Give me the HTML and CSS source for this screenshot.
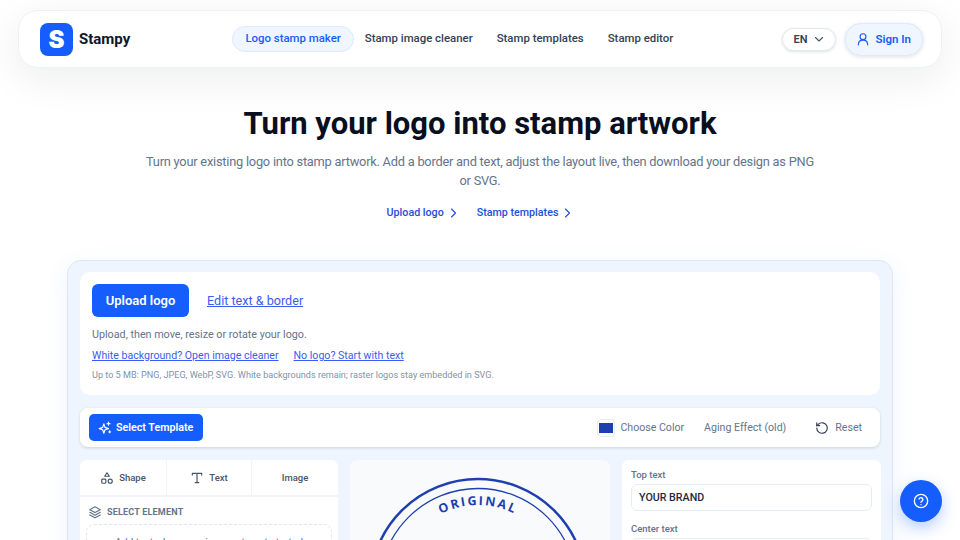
FILE: index.html
```html
<!DOCTYPE html>
<html lang="en">
<head>
  <meta charset="UTF-8" />
  <title>Stampy</title>
  <link rel="stylesheet" href="styles.css">
</head>
<body>
  <header class="navbar">
    <a class="brand">
      <span class="brand-mark">S</span>
      <span class="brand-name">Stampy</span>
    </a>
    <nav class="nav-links">
      <a class="nav-link active">Logo stamp maker</a>
      <a class="nav-link">Stamp image cleaner</a>
      <a class="nav-link">Stamp templates</a>
      <a class="nav-link">Stamp editor</a>
    </nav>
    <div class="nav-right">
      <button class="lang">EN
        <svg width="12" height="12" viewBox="0 0 24 24" fill="none" stroke="#475569" stroke-width="2.2" stroke-linecap="round" stroke-linejoin="round"><path d="M5 9l7 7 7-7"/></svg>
      </button>
      <button class="sign-in">
        <svg width="14" height="14" viewBox="0 0 24 24" fill="none" stroke="#155dfc" stroke-width="2" stroke-linecap="round" stroke-linejoin="round"><circle cx="12" cy="8" r="5"/><path d="M4 22c0-5 3.5-8 8-8s8 3 8 8"/></svg>
        Sign In
      </button>
    </div>
  </header>

  <section class="hero">
    <h1>Turn your logo into stamp artwork</h1>
    <p>Turn your existing logo into stamp artwork. Add a border and text, adjust the layout live, then download your design as PNG or SVG.</p>
    <div class="hero-links">
      <a>Upload logo
        <svg width="12" height="12" viewBox="0 0 24 24" fill="none" stroke="currentColor" stroke-width="2.2" stroke-linecap="round" stroke-linejoin="round"><path d="M9 4l8 8-8 8"/></svg>
      </a>
      <a>Stamp templates
        <svg width="12" height="12" viewBox="0 0 24 24" fill="none" stroke="currentColor" stroke-width="2.2" stroke-linecap="round" stroke-linejoin="round"><path d="M9 4l8 8-8 8"/></svg>
      </a>
    </div>
  </section>

  <section class="editor">
    <div class="upload-card">
      <div class="upload-row">
        <button class="upload-btn">Upload logo</button>
        <a class="link">Edit text &amp; border</a>
      </div>
      <p class="upload-hint">Upload, then move, resize or rotate your logo.</p>
      <div class="upload-links">
        <a class="link">White background? Open image cleaner</a>
        <a class="link">No logo? Start with text</a>
      </div>
      <p class="upload-note">Up to 5 MB: PNG, JPEG, WebP, SVG. White backgrounds remain; raster logos stay embedded in SVG.</p>
    </div>

    <div class="toolbar">
      <button class="template-btn">
        <svg width="14" height="14" viewBox="0 0 24 24" fill="none" stroke="#fff" stroke-width="2" stroke-linecap="round" stroke-linejoin="round"><path d="M10 5l2 6 6 2-6 2-2 6-2-6-6-2 6-2z"/><path d="M18 2v5M15.500 4.500h5M20 17v3M18.500 18.500h3"/></svg>
        Select Template
      </button>
      <div class="toolbar-right">
        <span class="tool"><span class="swatch"></span>Choose Color</span>
        <span class="tool">Aging Effect (old)</span>
        <span class="tool reset">
          <svg width="14" height="14" viewBox="0 0 24 24" fill="none" stroke="#334155" stroke-width="2" stroke-linecap="round" stroke-linejoin="round"><path d="M3 12a9 9 0 1 0 3-6.700L3 8"/><path d="M3 3v5h5"/></svg>
          Reset
        </span>
      </div>
    </div>

    <div class="workspace">
      <div class="panel left-panel">
        <div class="tabs">
          <span class="tab">
            <svg width="14" height="14" viewBox="0 0 24 24" fill="none" stroke="#475569" stroke-width="2" stroke-linecap="round" stroke-linejoin="round"><path d="M12 3l4 6H8z"/><rect x="3" y="14" width="7" height="7" rx="1.500"/><circle cx="17.500" cy="17.500" r="3.500"/></svg>
            Shape
          </span>
          <span class="tab">
            <svg width="14" height="14" viewBox="0 0 24 24" fill="none" stroke="#475569" stroke-width="2" stroke-linecap="round" stroke-linejoin="round"><path d="M4 7V4h16v3M12 4v16M9 20h6"/></svg>
            Text
          </span>
          <span class="tab">Image</span>
        </div>
        <div class="select-head">
          <svg width="14" height="14" viewBox="0 0 24 24" fill="none" stroke="#64748b" stroke-width="2" stroke-linecap="round" stroke-linejoin="round"><path d="M12 3l9 5-9 5-9-5z"/><path d="M3 12.500l9 5 9-5"/><path d="M3 17l9 5 9-5"/></svg>
          SELECT ELEMENT
        </div>
        <div class="drop-hint">Add text, shapes or images to get started</div>
      </div>

      <div class="panel canvas">
        <svg class="stamp" width="260" height="220" viewBox="0 0 260 220">
          <defs><path id="stamp-arc" d="M 46 127 A 82 82 0 0 1 210 127"/></defs>
          <circle cx="128" cy="127" r="108" fill="none" stroke="#1e40af" stroke-width="2.500"/>
          <circle cx="128" cy="127" r="98.500" fill="none" stroke="#1e40af" stroke-width="1.300"/>
          <text class="stamp-text"><textPath href="#stamp-arc" startOffset="50%" text-anchor="middle">ORIGINAL</textPath></text>
        </svg>
      </div>

      <div class="panel fields">
        <label class="field-label">Top text</label>
        <div class="field-input">YOUR BRAND</div>
        <label class="field-label">Center text</label>
        <div class="field-input"></div>
      </div>
    </div>
  </section>

  <button class="help-btn">
    <svg width="16" height="16" viewBox="0 0 24 24" fill="none" stroke="#fff" stroke-width="2" stroke-linecap="round" stroke-linejoin="round"><circle cx="12" cy="12" r="10"/><path d="M9.100 9a3 3 0 0 1 5.800 1c0 2-3 2.500-3 4"/><path d="M12 17.500h.01"/></svg>
  </button>
</body>
</html>
```

FILE: styles.css
```css
* {
  box-sizing: border-box;
}
html, body {
  height: 540px;
  overflow: hidden;
}
body {
  margin: 0;
  padding-top: 10px;
  font-family: "Roboto", "Liberation Sans", sans-serif;
  background: #fff;
  color: #334155;
}
button {
  font-family: inherit;
  border: none;
  cursor: pointer;
}
.navbar {
  display: flex;
  align-items: center;
  justify-content: space-between;
  width: 924px;
  height: 58px;
  margin: 0 auto;
  padding: 0 18px 0 21px;
  background: #fff;
  border: 1px solid #eef1f7;
  border-radius: 20px;
  box-shadow: 0 10px 40px rgba(15, 23, 42, 0.08);
}
.brand {
  display: flex;
  align-items: center;
  gap: 6px;
}
.brand-mark {
  display: flex;
  align-items: center;
  justify-content: center;
  width: 33px;
  height: 33px;
  border-radius: 8px;
  background: #155dfc;
  color: #fff;
  font-family: "Inter", sans-serif;
  font-size: 24px;
  font-weight: 900;
}
.brand-name {
  font-size: 15px;
  font-weight: 700;
  color: #0f172a;
}
.nav-links {
  display: flex;
  align-items: center;
  margin-left: 6px;
}
.nav-link {
  padding: 4px 11px 6px;
  font-size: 11.400px;
  font-weight: 500;
  border: 1px solid transparent;
  border-radius: 13px;
}
.nav-link.active {
  margin: 0 -1px;
  padding: 4px 12px 6px;
  color: #155dfc;
  background: #eff6ff;
  border-color: #dbeafe;
}
.nav-right {
  display: flex;
  align-items: center;
  gap: 9px;
}
.lang {
  display: flex;
  align-items: center;
  gap: 6px;
  height: 23px;
  padding: 0 10px;
  background: #fff;
  border: 1px solid #e2e8f0;
  border-radius: 12px;
  font-size: 11px;
  font-weight: 600;
  color: #334155;
  box-shadow: 0 1px 3px rgba(15, 23, 42, 0.12);
}
.sign-in {
  display: flex;
  align-items: center;
  gap: 5px;
  height: 33px;
  padding: 0 11px 0 10px;
  background: #eff6ff;
  border: 1px solid #dbeafe;
  border-radius: 16px;
  font-size: 11.500px;
  font-weight: 600;
  color: #155dfc;
  box-shadow: 0 1px 4px rgba(15, 23, 42, 0.12);
}
.hero {
  text-align: center;
  padding-top: 35px;
}
.hero h1 {
  margin: 0;
  font-size: 31px;
  line-height: 42px;
  font-weight: 700;
  color: #0a0f1f;
}
.hero p {
  width: 672px;
  margin: 7px auto 0;
  font-size: 12.800px;
  line-height: 19px;
  letter-spacing: -0.22px;
  color: #64748b;
}
.hero-links {
  display: flex;
  justify-content: center;
  gap: 18px;
  margin-top: 16px;
}
.hero-links a {
  display: flex;
  align-items: center;
  gap: 3px;
  font-size: 10.700px;
  font-weight: 500;
  color: #1d4ed8;
}
.editor {
  width: 826px;
  margin: 41px auto 0;
  padding: 11px 12px;
  background: #eff5fe;
  border: 1px solid #dbe6f8;
  border-radius: 14px;
  box-shadow: 0 6px 24px rgba(37, 99, 235, 0.08);
}
.upload-card {
  height: 123px;
  padding: 12px;
  background: #fff;
  border-radius: 10px;
}
.upload-row {
  display: flex;
  align-items: center;
  gap: 18px;
}
.upload-btn {
  width: 97px;
  height: 33px;
  background: #155dfc;
  color: #fff;
  border-radius: 6px;
  font-size: 13px;
  font-weight: 600;
}
.link {
  color: #3b5bf0;
  text-decoration: underline;
}
.upload-row .link {
  font-size: 12.600px;
}
.upload-hint {
  margin: 11px 0 0;
  font-size: 10.750px;
  color: #64748b;
}
.upload-links {
  display: flex;
  gap: 15px;
  margin-top: 8px;
  font-size: 10.600px;
}
.upload-note {
  margin: 8px 0 0;
  font-size: 9.100px;
  color: #8492a6;
}
.toolbar {
  display: flex;
  align-items: center;
  justify-content: space-between;
  height: 39px;
  margin-top: 13px;
  padding: 0 18px 0 9px;
  background: #fff;
  border-radius: 8px;
  box-shadow: 0 1px 3px rgba(15, 23, 42, 0.16);
}
.template-btn {
  display: flex;
  align-items: center;
  gap: 4px;
  height: 27px;
  padding: 0 10px 0 9px;
  background: #155dfc;
  color: #fff;
  border-radius: 5px;
  font-size: 10.700px;
  font-weight: 600;
}
.toolbar-right {
  display: flex;
  align-items: center;
  gap: 20px;
}
.tool {
  display: flex;
  align-items: center;
  gap: 5px;
  font-size: 10.600px;
  color: #64748b;
}
.tool.reset {
  margin-left: 9px;
  gap: 6px;
}
.swatch {
  width: 18px;
  height: 18px;
  padding: 3px 1px;
  background: #1e40af content-box;
  border: 1px solid #e8eef8;
  border-radius: 3px;
}
.workspace {
  display: grid;
  grid-template-columns: 258px 260px 259px;
  gap: 12px;
  margin-top: 13px;
}
.panel {
  height: 200px;
  background: #fff;
  border-radius: 7px;
  overflow: hidden;
}
.tabs {
  display: grid;
  grid-template-columns: 86px 85px 87px;
  height: 37px;
  border-bottom: 2px solid #f1f5f9;
}
.tab {
  display: flex;
  align-items: center;
  justify-content: center;
  gap: 5px;
  font-size: 9.500px;
  font-weight: 500;
  color: #475569;
  border-left: 1px solid #f1f5f9;
}
.tab:first-child {
  border-left: none;
}
.select-head {
  display: flex;
  align-items: center;
  gap: 5px;
  padding: 8px 8px 0;
  font-size: 9px;
  font-weight: 700;
  letter-spacing: 0.2px;
  color: #64748b;
}
.drop-hint {
  margin: 5px 6px 0;
  padding: 11px 0 8px;
  border: 1px dashed #e2e8f0;
  border-radius: 8px;
  text-align: center;
  font-size: 10.300px;
  color: #64748b;
}
.canvas {
  background: #f8fafc;
}
.stamp {
  display: block;
}
.stamp-text {
  font-family: "Open Sans", sans-serif;
  font-size: 12.500px;
  font-weight: 700;
  letter-spacing: 2px;
  fill: #1e40af;
}
.fields {
  padding: 9px;
}
.field-label {
  display: block;
  font-size: 9.500px;
  font-weight: 500;
  color: #64748b;
}
.field-input {
  height: 27px;
  margin: 4px 0 12px;
  padding: 0 7px;
  border: 1px solid #e8edf5;
  border-radius: 6px;
  font-size: 10.700px;
  font-weight: 500;
  line-height: 25px;
  color: #1e293b;
}
.help-btn {
  position: fixed;
  right: 18px;
  bottom: 18px;
  display: flex;
  align-items: center;
  justify-content: center;
  width: 42px;
  height: 42px;
  background: #155dfc;
  border-radius: 50%;
  box-shadow: 0 6px 16px rgba(21, 93, 252, 0.3);
}
```
